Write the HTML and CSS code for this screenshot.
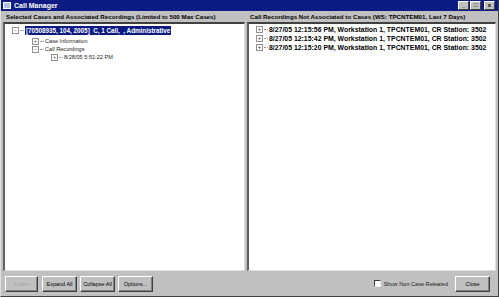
FILE: index.html
```html
<!DOCTYPE html>
<html lang="en">
<head>
    <meta charset="UTF-8">
    <title>Call Manager</title>
    <link rel="stylesheet" href="styles.css">
</head>
<body>
    <div class="window">
        <div class="titlebar">
            <span class="app-icon"></span>
            <span class="title">Call Manager</span>
            <div class="caption-btns">
                <span class="cap">_</span>
                <span class="cap">&#9633;</span>
                <span class="cap close-x">x</span>
            </div>
        </div>

        <div class="panes">
            <div class="pane cases">
                <div class="pane-head">Selected Cases and Associated Recordings (Limited to 500 Max Cases)</div>
                <div class="tree">
                    <div class="node lvl0 top"><span class="box">&minus;</span><span class="line"></span><span class="label selected">[70508935, 104, 2005]&nbsp; C, 1 Call,&nbsp; , Administrative</span></div>
                    <div class="node lvl1"><span class="box">+</span><span class="line"></span><span class="label">Case Information</span></div>
                    <div class="node lvl1"><span class="box">&minus;</span><span class="line"></span><span class="label">Call Recordings</span></div>
                    <div class="node lvl2"><span class="box">+</span><span class="line"></span><span class="label">8/28/05 5:51:22 PM</span></div>
                </div>
            </div>
            <div class="pane">
                <div class="pane-head">Call Recordings Not Associated to Cases (WS: TPCNTEM01, Last 7 Days)</div>
                <div class="tree">
                    <div class="node lvl0 bold"><span class="box">+</span><span class="line"></span><span class="label">8/27/05 12:15:56 PM, Workstation 1, TPCNTEM01, CR Station: 3502</span></div>
                    <div class="node lvl0 bold"><span class="box">+</span><span class="line"></span><span class="label">8/27/05 12:15:42 PM, Workstation 1, TPCNTEM01, CR Station: 3502</span></div>
                    <div class="node lvl0 bold"><span class="box">+</span><span class="line"></span><span class="label">8/27/05 12:15:20 PM, Workstation 1, TPCNTEM01, CR Station: 3502</span></div>
                </div>
            </div>
        </div>

        <div class="footer">
            <button class="btn listen" disabled>Listen</button>
            <button class="btn">Expand All</button>
            <button class="btn">Collapse All</button>
            <button class="btn">Options...</button>
            <label class="check"><span class="checkbox"></span>Show Non Case Releated</label>
            <button class="btn close">Close</button>
        </div>
    </div>
</body>
</html>
```

FILE: styles.css
```css
html, body {
    margin: 0;
    padding: 0;
}
body {
    width: 499px;
    height: 297px;
    background: #c0c0c0;
    font-family: 'Liberation Sans', Arial, sans-serif;
    overflow: hidden;
}
.window {
    display: flex;
    flex-direction: column;
    height: 297px;
    box-sizing: border-box;
    border-left: 1px solid #dfdfdf;
    border-right: 1px solid #404040;
    border-bottom: 1px solid #404040;
}
.titlebar {
    height: 11px;
    background: #0c1c84;
    display: flex;
    align-items: center;
    padding: 0 2px;
    color: white;
}
.app-icon {
    width: 6px;
    height: 5px;
    background: #b0c0e0;
    border: 1px solid #fff;
    margin-right: 3px;
}
.title {
    font-size: 7px;
    font-weight: bold;
    flex: 1;
}
.caption-btns {
    display: flex;
    gap: 1px;
    margin-right: 1px;
}
.cap {
    width: 9px;
    height: 7px;
    background: #c0c0c0;
    color: #000;
    font-size: 6px;
    line-height: 7px;
    text-align: center;
    font-weight: bold;
    border-top: 1px solid #fff;
    border-left: 1px solid #fff;
    border-right: 1px solid #404040;
    border-bottom: 1px solid #404040;
}
.close-x {
    margin-left: 2px;
}
.panes {
    flex: 1;
    display: flex;
    gap: 2px;
    padding: 0 2px;
}
.pane {
    flex: 1;
    min-width: 0;
    display: flex;
    flex-direction: column;
}
.pane.cases {
    flex: 0 0 242px;
}
.pane-head {
    height: 11px;
    font-size: 6.2px;
    font-weight: bold;
    line-height: 11px;
    padding-left: 3px;
    white-space: nowrap;
    overflow: hidden;
}
.tree {
    flex: 1;
    background: #fff;
    overflow: hidden;
    border-top: 2px solid #404040;
    border-left: 2px solid #606060;
    border-right: 1px solid #dfdfdf;
    border-bottom: 1px solid #dfdfdf;
}
.node {
    display: flex;
    align-items: center;
    height: 8px;
    font-size: 5.6px;
    color: #222;
    white-space: nowrap;
}
.lvl0 { padding-left: 7px; }
.lvl1 { padding-left: 27px; }
.lvl2 { padding-left: 46px; }
.node.top {
    height: 10px;
    margin-top: 1px;
    margin-bottom: 2px;
}
.box {
    width: 5px;
    height: 5px;
    border: 1px solid #909090;
    font-size: 5px;
    line-height: 5px;
    text-align: center;
    color: #444;
}
.line {
    width: 4px;
    border-top: 1px dotted #999;
    margin: 0 1px;
}
.label.selected {
    background: #0c1c84;
    color: #fff;
    font-weight: bold;
    font-size: 6.3px;
    padding: 1px 1px;
}
.bold {
    font-size: 6.9px;
    font-weight: bold;
    color: #000;
    margin-top: 1px;
}
.footer {
    height: 25px;
    display: flex;
    align-items: center;
    padding: 0 8px 0 4px;
    gap: 3px;
}
.btn {
    width: 35px;
    height: 16px;
    padding: 0;
    font-family: 'Liberation Sans', Arial, sans-serif;
    font-size: 5.5px;
    background: #c0c0c0;
    color: #000;
    border-top: 1px solid #fff;
    border-left: 1px solid #fff;
    border-right: 1px solid #404040;
    border-bottom: 1px solid #404040;
    box-shadow: inset -1px -1px 0 #808080;
}
.btn.listen {
    color: #a0a0a0;
    width: 33px;
    margin-right: 1px;
}
.check {
    margin-left: auto;
    display: flex;
    align-items: center;
    font-size: 5.6px;
    color: #222;
    margin-right: 4px;
}
.checkbox {
    width: 5px;
    height: 5px;
    background: #fff;
    border-top: 1px solid #404040;
    border-left: 1px solid #404040;
    border-right: 1px solid #eee;
    border-bottom: 1px solid #eee;
    margin-right: 3px;
}
.close {
    width: 35px;
}
```
